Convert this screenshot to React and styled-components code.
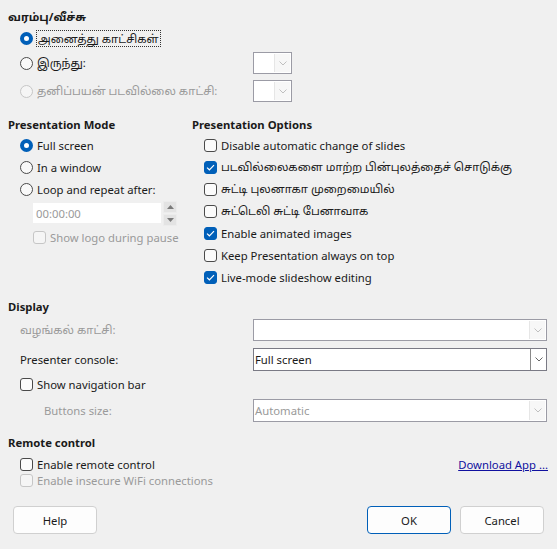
import React from "react";
import styled, { createGlobalStyle, css } from "styled-components";

const font = `"Segoe UI", "Noto Sans", "Noto Sans Tamil", "Liberation Sans", sans-serif`;
const blue = "#005fb8";
const disabledText = "#9a9a9a";

const Global = createGlobalStyle`
	html, body {
		margin: 0;
		padding: 0;
		background: #f0f0f0;
	}
	body {
		font-family: ${font};
		font-size: 11.3px;
		color: #1a1a1a;
	}
`;

const Dialog = styled.div`
	width: 557px;
	height: 549px;
	box-sizing: border-box;
	padding: 8px 13px 15px 8px;
	display: flex;
	flex-direction: column;
	background: #f0f0f0;
`;

const Heading = styled.div`
	font-weight: bold;
	height: 18px;
	line-height: 18px;
	margin-top: ${(props) => props.top || 0}px;
`;

const Group = styled.div`
	display: flex;
	flex-direction: column;
	padding-left: ${(props) => props.indent || 12}px;
	gap: ${(props) => props.gap || 0}px;
	margin-top: ${(props) => props.top || 0}px;
`;

const Row = styled.div`
	display: flex;
	align-items: center;
	height: ${(props) => props.h || 22}px;
	padding-left: ${(props) => props.indent || 0}px;
	margin-top: ${(props) => props.top || 0}px;
	color: ${(props) => (props.disabled ? disabledText : "inherit")};
	white-space: nowrap;
`;

const FieldRow = styled.div`
	display: grid;
	grid-template-columns: ${(props) => props.label}px 1fr;
	align-items: center;
	height: ${(props) => props.h || 22}px;
	margin-top: ${(props) => props.top || 0}px;
	color: ${(props) => (props.disabled ? disabledText : "inherit")};
	white-space: nowrap;
`;

const Label = styled.span`
	padding-left: ${(props) => props.indent || 0}px;
	display: flex;
	align-items: center;
	color: ${(props) => (props.muted ? disabledText : "inherit")};
`;

const Focus = styled.span`
	outline: 1px dotted #333;
	outline-offset: 0;
	padding: 0 1px;
	line-height: 15px;
`;

const RadioDot = styled.span`
	width: 13px;
	height: 13px;
	box-sizing: border-box;
	border-radius: 50%;
	margin-right: 4px;
	flex: none;
	border: 1px solid ${(props) => (props.disabled ? "#c6c6c6" : "#4a4a4a")};
	background: ${(props) => (props.disabled ? "#f5f5f5" : "#f9f9f9")};

	${(props) =>
		props.checked &&
		css`
			border: 4px solid ${blue};
			background: #fff;
		`}
`;

const Box = styled.span`
	width: 13px;
	height: 13px;
	box-sizing: border-box;
	border-radius: 3px;
	margin-right: 4px;
	flex: none;
	display: flex;
	align-items: center;
	justify-content: center;
	border: 1px solid ${(props) => (props.disabled ? "#c6c6c6" : "#4a4a4a")};
	background: ${(props) => (props.disabled ? "#f5f5f5" : "#fbfbfb")};

	${(props) =>
		props.checked &&
		css`
			border-color: ${blue};
			background: ${blue};
		`}
`;

function Radio({ checked, disabled, children }) {
	return (
		<>
			<RadioDot checked={checked} disabled={disabled} />
			{children}
		</>
	);
}

function Check({ checked, disabled, children }) {
	return (
		<>
			<Box checked={checked} disabled={disabled}>
				{checked && (
					<svg width="9" height="7" viewBox="0 0 9 7">
						<path d="M1 3.6 L3.4 5.8 L8 1.2" fill="none" stroke="#fff" strokeWidth="1.2" />
					</svg>
				)}
			</Box>
			{children}
		</>
	);
}

const ComboBox = styled.div`
	width: ${(props) => props.w}px;
	height: ${(props) => props.h || 22}px;
	box-sizing: border-box;
	border: 1px solid ${(props) => (props.disabled ? "#9b9ba5" : "#7a7a85")};
	background: #fff;
	display: flex;
	align-items: stretch;
	color: ${(props) => (props.disabled ? disabledText : "#1a1a1a")};
`;

const ComboText = styled.div`
	flex: 1;
	display: flex;
	align-items: center;
	padding-left: 1px;
`;

const ComboButton = styled.div`
	width: 15px;
	display: flex;
	align-items: center;
	justify-content: center;
	border-left: 1px solid ${(props) => (props.disabled ? "#e6e6e6" : "#8a8a8a")};
	margin: ${(props) => (props.disabled ? "1px" : "0")};
	background: ${(props) => (props.disabled ? "#f7f7f7" : "#fff")};
`;

function Combo({ w, h, disabled, value }) {
	return (
		<ComboBox w={w} h={h} disabled={disabled}>
			<ComboText>{value}</ComboText>
			<ComboButton disabled={disabled}>
				<svg width="8" height="5" viewBox="0 0 8 5">
					<path
						d="M0.5 0.5 L4 4 L7.5 0.5"
						fill="none"
						stroke={disabled ? "#b8b8b8" : "#555"}
						strokeWidth="0.9"
					/>
				</svg>
			</ComboButton>
		</ComboBox>
	);
}

const Columns = styled.div`
	display: grid;
	grid-template-columns: 184px 1fr;
	margin-top: 14px;
`;

const Spin = styled.div`
	display: flex;
	align-items: center;
	height: 22px;
	margin: 2px 0 2px 12px;
	width: 145px;
`;

const SpinField = styled.div`
	flex: 1;
	height: 22px;
	box-sizing: border-box;
	background: #fff;
	border: 1px solid #f0f0f0;
	color: ${disabledText};
	display: flex;
	align-items: center;
	padding-left: 3px;
`;

const SpinButtons = styled.div`
	display: flex;
	flex-direction: column;
	gap: 1px;
	width: 14px;
	margin-left: 1px;
`;

const SpinArrow = styled.div`
	height: 10px;
	background: #e3e3e3;
	border: 1px solid #ececec;
	display: flex;
	align-items: center;
	justify-content: center;
`;

const Link = styled.a`
	color: #10109f;
	text-decoration: underline;
	margin-left: auto;
	margin-right: -4px;
`;

const ButtonBar = styled.div`
	margin-top: auto;
	display: flex;
	align-items: center;
	gap: 9px;
	padding-left: 5px;
`;

const Button = styled.div`
	width: 84px;
	height: 28px;
	box-sizing: border-box;
	display: flex;
	align-items: center;
	justify-content: center;
	background: #fdfdfd;
	border: 1px solid ${(props) => (props.primary ? blue : "#d0d0d0")};
	border-radius: 4px;
	margin-left: ${(props) => (props.push ? "auto" : "0")};
`;

const presentationOptions = [
	{ label: "Disable automatic change of slides" },
	{ label: "படவில்லைகளை மாற்ற பின்புலத்தைச் சொடுக்கு", checked: true },
	{ label: "சுட்டி புலனாகா முறைமையில்" },
	{ label: "சுட்டெலி சுட்டி பேனாவாக" },
	{ label: "Enable animated images", checked: true },
	{ label: "Keep Presentation always on top" },
	{ label: "Live-mode slideshow editing", checked: true },
];

export default function App() {
	return (
		<Dialog>
			<Global />
			<Heading>வரம்பு/வீச்சு</Heading>
			<Group top={2} gap={4}>
				<Row h={20}>
					<Radio checked>
						<Focus>அனைத்து காட்சிகள்</Focus>
					</Radio>
				</Row>
				<FieldRow label={233}>
					<Label>
						<Radio>இருந்து:</Radio>
					</Label>
					<Combo w={39} disabled />
				</FieldRow>
				<FieldRow label={233} disabled top={2}>
					<Label>
						<Radio disabled>தனிப்பயன் படவில்லை காட்சி:</Radio>
					</Label>
					<Combo w={39} disabled />
				</FieldRow>
			</Group>

			<Columns>
				<div>
					<Heading>Presentation Mode</Heading>
					<Group>
						<Row>
							<Radio checked>Full screen</Radio>
						</Row>
						<Row>
							<Radio>In a window</Radio>
						</Row>
						<Row>
							<Radio>Loop and repeat after:</Radio>
						</Row>
						<Spin>
							<SpinField>00:00:00</SpinField>
							<SpinButtons>
								<SpinArrow>
									<svg width="7" height="4" viewBox="0 0 7 4">
										<path d="M0 4 L3.5 0 L7 4 Z" fill="#7a7a7a" />
									</svg>
								</SpinArrow>
								<SpinArrow>
									<svg width="7" height="4" viewBox="0 0 7 4">
										<path d="M0 0 L3.5 4 L7 0 Z" fill="#7a7a7a" />
									</svg>
								</SpinArrow>
							</SpinButtons>
						</Spin>
						<Row indent={13} disabled>
							<Check disabled>Show logo during pause</Check>
						</Row>
					</Group>
				</div>
				<div>
					<Heading>Presentation Options</Heading>
					<Group>
						{presentationOptions.map((opt) => (
							<Row key={opt.label}>
								<Check checked={opt.checked}>{opt.label}</Check>
							</Row>
						))}
					</Group>
				</div>
			</Columns>

			<Heading top={10}>Display</Heading>
			<Group top={3}>
				<FieldRow label={233} h={22} disabled>
					<Label>வழங்கல் காட்சி:</Label>
					<Combo w={294} disabled />
				</FieldRow>
				<FieldRow label={233} h={23} top={7}>
					<Label>Presenter console:</Label>
					<Combo w={294} h={23} value="Full screen" />
				</FieldRow>
				<Row h={24} top={1}>
					<Check>Show navigation bar</Check>
				</Row>
				<FieldRow label={233} h={23} top={3}>
					<Label indent={24} muted>
						Buttons size:
					</Label>
					<Combo w={294} h={23} disabled value="Automatic" />
				</FieldRow>
			</Group>

			<Heading top={12}>Remote control</Heading>
			<Group top={4}>
				<Row h={16}>
					<Check>Enable remote control</Check>
					<Link>Download App ...</Link>
				</Row>
				<Row h={16} disabled>
					<Check disabled>Enable insecure WiFi connections</Check>
				</Row>
			</Group>

			<ButtonBar>
				<Button>Help</Button>
				<Button primary push>
					OK
				</Button>
				<Button>Cancel</Button>
			</ButtonBar>
		</Dialog>
	);
}
